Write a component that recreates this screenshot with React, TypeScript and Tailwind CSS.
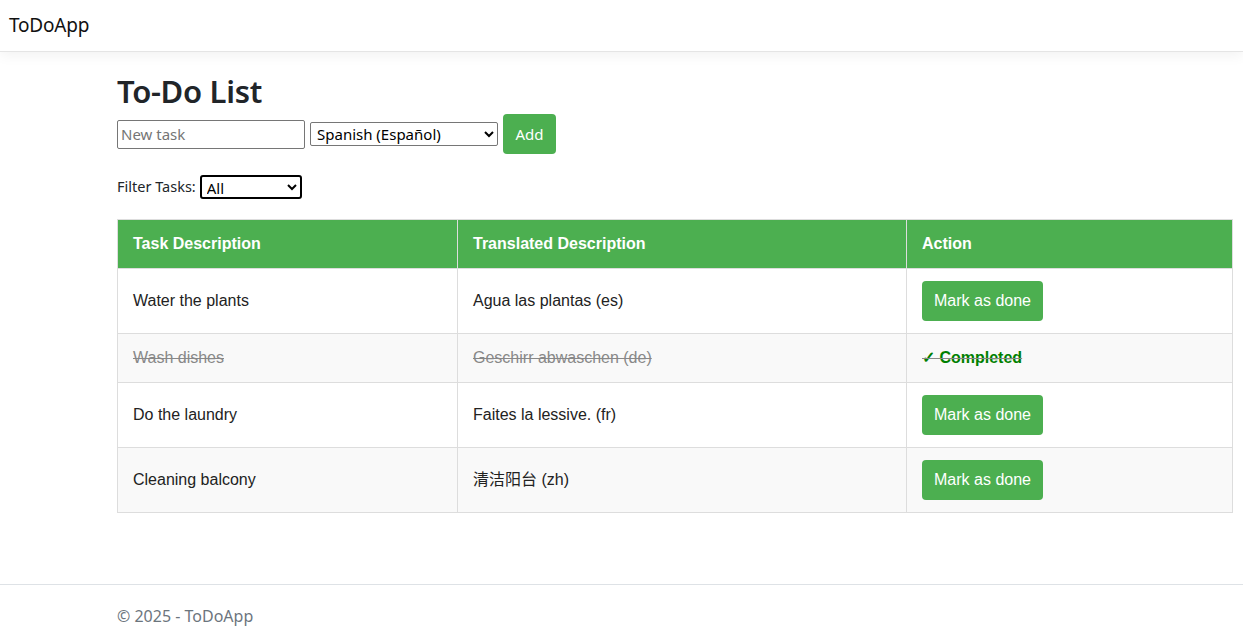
import { useState } from 'react';

type Task = {
  id: number;
  description: string;
  translated: string;
  done: boolean;
};

const initialTasks: Task[] = [
  { id: 1, description: 'Water the plants', translated: 'Agua las plantas (es)', done: false },
  { id: 2, description: 'Wash dishes', translated: 'Geschirr abwaschen (de)', done: true },
  { id: 3, description: 'Do the laundry', translated: 'Faites la lessive. (fr)', done: false },
  { id: 4, description: 'Cleaning balcony', translated: '清洁阳台 (zh)', done: false },
];

const uiFont = { fontFamily: '"Noto Sans", "Open Sans", sans-serif' };

function App() {
  const [tasks, setTasks] = useState<Task[]>(initialTasks);
  const [filter, setFilter] = useState('all');

  function markDone(id: number) {
    setTasks((prev) => prev.map((t) => (t.id === id ? { ...t, done: true } : t)));
  }

  const visible = tasks.filter((t) =>
    filter === 'all' ? true : filter === 'done' ? t.done : !t.done
  );

  return (
    <div className="min-h-screen bg-white text-[#212529]" style={uiFont}>
      {/* Navbar */}
      <nav className="h-[52px] border-b border-[#e5e5e5] shadow-[0_4px_12px_rgba(0,0,0,0.05)] flex items-center px-[9px]">
        <span className="text-[19px] tracking-[-0.2px] text-[#111]">ToDoApp</span>
      </nav>

      {/* Main */}
      <main className="pl-[117px] pr-[10px] pt-[20px] pb-[71px]">
        <h1 className="text-[31px] font-semibold leading-[38px] tracking-[-0.3px] mb-[4px]">To-Do List</h1>

        <div className="flex items-center gap-[5px]">
          <input
            placeholder="New task"
            className="w-[188px] h-[29px] border border-[#767676] rounded-[2px] px-[3px] text-[15px] placeholder:text-[#757575] outline-none"
          />
          <select className="w-[188px] h-[24px] border border-[#767676] rounded-[2px] text-[15px] text-black bg-white px-[2px]">
            <option>Spanish (Español)</option>
            <option>German (Deutsch)</option>
            <option>French (Français)</option>
            <option>Chinese (中文)</option>
          </select>
          <button className="w-[53px] h-[40px] bg-[#4CAF50] text-white text-[15px] rounded-[4px]">
            Add
          </button>
        </div>

        <div className="mt-[21px] flex items-center text-[14.5px]">
          <span className="mr-[4px]">Filter Tasks:</span>
          <select
            value={filter}
            onChange={(e) => setFilter(e.target.value)}
            className="w-[102px] h-[24px] border-2 border-black rounded-[3px] text-[15px] text-black bg-white px-[1px]"
          >
            <option value="all">All</option>
            <option value="done">Completed</option>
            <option value="pending">Pending</option>
          </select>
        </div>

        <table
          className="mt-[20px] w-[1116px] border-collapse text-[16px] text-[#222]"
          style={{ fontFamily: '"Liberation Sans", Arial, sans-serif' }}
        >
          <thead>
            <tr className="bg-[#4CAF50] text-white">
              <th className="w-[340px] h-[49px] border border-[#ddd] px-[15px] text-left font-bold">Task Description</th>
              <th className="w-[449px] border border-[#ddd] px-[15px] text-left font-bold">Translated Description</th>
              <th className="border border-[#ddd] px-[15px] text-left font-bold">Action</th>
            </tr>
          </thead>
          <tbody>
            {visible.map((task, i) => (
              <tr key={task.id} className={i % 2 === 1 ? 'bg-[#f9f9f9]' : 'bg-white'}>
                <td className={`border border-[#ddd] px-[15px] ${task.done ? 'h-[49px] line-through text-[#888]' : 'h-[65px]'}`}>
                  {task.description}
                </td>
                <td
                  className={`border border-[#ddd] px-[15px] ${task.done ? 'line-through text-[#888]' : ''}`}
                  style={{ fontFamily: '"Liberation Sans", Arial, "Noto Sans CJK SC", sans-serif' }}
                >
                  {task.translated}
                </td>
                <td className="border border-[#ddd] px-[15px]">
                  {task.done ? (
                    <span className="font-bold text-[#008000] line-through decoration-[#888]">✓ Completed</span>
                  ) : (
                    <button
                      onClick={() => markDone(task.id)}
                      className="w-[121px] h-[40px] bg-[#4CAF50] text-white rounded-[4px] text-[16px]"
                    >
                      Mark as done
                    </button>
                  )}
                </td>
              </tr>
            ))}
          </tbody>
        </table>
      </main>

      {/* Footer */}
      <footer className="border-t border-[#dee2e6] pl-[117px] pt-[19px] text-[16px] text-[#6c757d]">
        © 2025 - ToDoApp
      </footer>
    </div>
  );
}

export default App
